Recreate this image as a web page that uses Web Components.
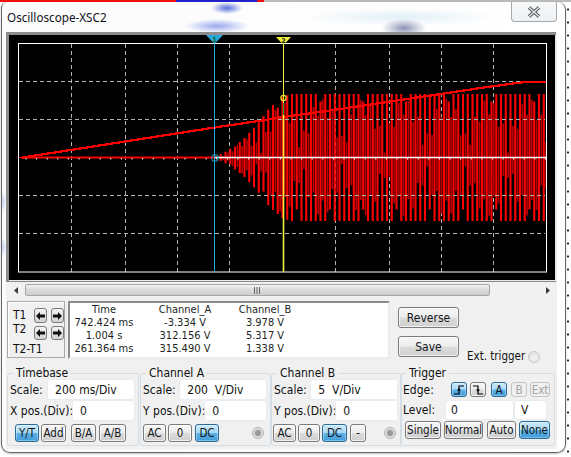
<!DOCTYPE html>
<html><head><meta charset="utf-8"><title>Oscilloscope-XSC2</title>
<style>
html,body{margin:0;padding:0;height:457px;overflow:hidden}
body{font:11px "DejaVu Sans Condensed","DejaVu Sans",sans-serif;color:#111;
background:
 linear-gradient(90deg,#e11 0,#e11 176px,#22c 176px,#22c 257px,#e11 257px,#e11 264px,#bbb 264px) 0 0/100% 2px no-repeat,
 radial-gradient(circle,#222 1px,transparent 1.2px) 565px 3px/6px 13px repeat-y,
 #fff;}
</style></head><body>
<scope-window>
  <scope-screen></scope-screen>
  <scope-scrollbar></scope-scrollbar>
  <scope-readouts></scope-readouts>
  <scope-controls></scope-controls>
</scope-window>
<script>
function def(name,css,html,init){
  customElements.define(name,class extends HTMLElement{
    constructor(){super();const r=this.attachShadow({mode:'open'});r.innerHTML='<style>'+css+'</style>'+html;}
    connectedCallback(){if(init)init.call(this,this.shadowRoot);}
  });
}
def('scope-window',`
:host{display:block;box-sizing:border-box;width:565px;height:451px;margin:2px 0 0 1px;padding:0 8px 0 4px;
border:1px solid #666;border-top:0;border-radius:6px 8px 9px 9px;
background:
 radial-gradient(ellipse 32px 7px at 215px 24px,#98aaec,rgba(152,170,236,0) 100%),
 radial-gradient(ellipse 16px 6px at 225px 6px,#5a70de,rgba(90,112,222,0) 100%),
 radial-gradient(ellipse 22px 9px at 402px 26px,#8d92b6,rgba(141,146,182,0) 100%),
 radial-gradient(ellipse 100px 9px at 400px 15px,#e3f0f7,rgba(227,240,247,0) 100%),
 radial-gradient(ellipse 3px 10px at 1px 200px,#c9d3f4,rgba(201,211,244,0) 100%),
 radial-gradient(ellipse 3px 10px at 1px 245px,#c9d3f4,rgba(201,211,244,0) 100%),
 linear-gradient(90deg,#fbfbfc,#fff);box-shadow:0 1px 2px rgba(0,0,0,.25)}
.bar{display:flex;justify-content:space-between;height:30px;align-items:flex-start}
.t{font:11.7px "Noto Sans","Open Sans",sans-serif;color:#10131a;margin:7px 0 0 1px}
.x{box-sizing:border-box;width:46px;height:20px;border:1px solid #a5a9ad;border-top:0;border-radius:0 0 4px 4px;display:flex;align-items:center;justify-content:center;background:linear-gradient(#f6f8f9,#eef2f4)}
.p{background:#f0f0f0;height:417px}
`,`<div class="bar"><div class="t">Oscilloscope-XSC2</div><div class="x"><svg width="14" height="12" viewBox="0 0 14 12"><path d="M2 1.500L12 10.500M12 1.500L2 10.500" stroke="#4b5157" stroke-width="3.400" fill="none"/><path d="M2 1.500L12 10.500M12 1.500L2 10.500" stroke="#e4e8ea" stroke-width="1.400" fill="none"/></svg></div></div><div class="p"><slot></slot></div>`);

def('scope-screen',`:host{display:block;height:251px}svg{display:block}`,
`<svg id="s" width="551" height="251" viewBox="6 32 551 251" xmlns="http://www.w3.org/2000/svg"></svg>`,
function(r){
  const interp=(t,x)=>{if(x<=t[0][0])return t[0][1];for(let i=1;i<t.length;i++){if(x<=t[i][0]){const a=t[i-1],b=t[i];return a[1]+(b[1]-a[1])*(x-a[0])/(b[0]-a[0]);}}return t[t.length-1][1];};
  let h='';
  h+='<rect x="6" y="32" width="551" height="251" fill="#f0f0f0"/>';
  h+='<rect x="6" y="32" width="550" height="250" fill="#8c8c8c"/>';
  h+='<rect x="9" y="35" width="546" height="245" fill="#000"/>';
  h+='<rect x="9" y="280" width="547" height="1" fill="#e8e8e8"/>';
  h+='<rect x="555" y="35" width="1" height="246" fill="#e8e8e8"/>';
  const vs=[71,125,177,229,283,335,389,441,493], hs=[81,119,157,195,233];
  for(const x of vs)h+=`<line x1="${x+.5}" y1="44" x2="${x+.5}" y2="272" stroke="#b4b4b4" stroke-dasharray="4 3"/>`;
  // Channel A: flat trace, then a comb of bright full-height bars with dim beat bars between them
  const env=[[214,0],[228,7],[243,18],[257,33],[270,50],[283,61],[292,63.5],[546,63.5]];
  const period=4.75;
  let bright='M22 157.5H214', dim='';
  for(let k=0,x=216;x<545;k++,x+=period){
    const a=interp(env,x);
    const lo=(k%7===3)?0.82:1, up=(k%9===4)?0.88:1;
    bright+=`M${x.toFixed(2)} ${(157.5-a*up).toFixed(1)}V${(157.5+a*lo).toFixed(1)}`;
    const xd=x+period/2, ad=interp(env,xd);
    const m=0.18+0.62*Math.abs(Math.sin(k*0.36));
    const off=(k%2?1:-1)*ad*0.12;
    dim+=`M${xd.toFixed(2)} ${(157.5-ad*m+off).toFixed(1)}V${(157.5+ad*m+off).toFixed(1)}`;
  }
  h+=`<path d="${dim}" fill="none" stroke="#b80000" stroke-width="1.700"/>`;
  h+=`<path d="${bright}" fill="none" stroke="#f00" stroke-width="2.100"/>`;
  for(const y of hs){ if(y===157)continue; h+=`<line x1="19" y1="${y+.5}" x2="545" y2="${y+.5}" stroke="#b4b4b4" stroke-dasharray="4 3"/>`;}
  let t='';for(let tx=26;tx<546;tx+=10.6)t+=`M${tx.toFixed(1)} 158V159.500`;
  h+=`<path d="${t}" stroke="#fff" fill="none"/>`;
  h+=`<line x1="214" y1="157.500" x2="546" y2="157.500" stroke="#fff" stroke-width="1.300"/>`;
  h+=`<line x1="19" y1="157.500" x2="214" y2="157.500" stroke="#f00"/>`;
  // Channel B stepped ramp
  const rp=[[22,157.5],[214,127.5],[258,121],[283,117],[333,110],[387,102],[440,94],[480,88],[520,82.5],[546,81.5]];
  let q='';let pv=null;
  for(let px=22;px<=546;px+=1){const yy=Math.round(interp(rp,px));q+=(q?'L':'M')+px+' '+(pv===null?yy:pv)+(pv!==null&&pv!==yy?'L'+px+' '+yy:'');pv=yy;}
  h+=`<path d="${q}" fill="none" stroke="#f00" stroke-width="2" shape-rendering="crispEdges"/>`;
  h+='<rect x="18.500" y="43.500" width="528" height="228.500" fill="none" stroke="#fff"/>';
  h+='<line x1="214.500" y1="40" x2="214.500" y2="272" stroke="#29a9dc"/>';
  h+='<path d="M206 35H223L214.500 44Z" fill="#29a9dc"/>';
  h+='<text x="214.500" y="41.500" font-size="7" font-weight="bold" text-anchor="middle" fill="#063" font-family="DejaVu Sans">1</text>';
  h+='<rect x="212" y="155" width="6" height="6" rx="1" fill="none" stroke="#29a9dc"/>';
  h+='<line x1="283.500" y1="40" x2="283.500" y2="103" stroke="#f2f23c"/>';
  h+='<line x1="283.500" y1="103" x2="283.500" y2="115" stroke="#1e9a3c"/>';
  h+='<line x1="283.500" y1="115" x2="283.500" y2="272" stroke="#f2f23c" stroke-width="1.600"/>';
  h+='<path d="M276 37H291L283.500 45Z" fill="#f2f23c"/>';
  h+='<text x="283.500" y="42.500" font-size="6.500" font-weight="bold" text-anchor="middle" fill="#222" font-family="DejaVu Sans">2</text>';
  h+='<circle cx="283.500" cy="98" r="2.600" fill="none" stroke="#e6e62c" stroke-width="1.200"/>';
  r.getElementById('s').innerHTML=h;
});

def('scope-scrollbar',`
:host{display:flex;height:13px;box-sizing:border-box;background:#f1f1f1;padding:1px 1px 0 1px;align-items:stretch}
.a{width:18px;display:flex;align-items:center;justify-content:center}
.th{width:465px;box-sizing:border-box;border:1px solid #a6a6a6;border-radius:2px;background:linear-gradient(#f3f3f3,#dadada 50%,#cfcfcf);display:flex;align-items:center;justify-content:center}
.tr{flex:1}
`,`<div class="a"><svg width="5" height="7"><path d="M4 0V7L0 3.500Z" fill="#3c3c3c"/></svg></div>
<div class="th"><svg width="8" height="7"><path d="M.5 0V7M3 0V7M5.500 0V7" stroke="#666"/></svg></div>
<div class="tr"></div>
<div class="a"><svg width="5" height="7"><path d="M1 0V7L5 3.500Z" fill="#3c3c3c"/></svg></div>`);

def('x-btn',`
:host{display:inline-flex;box-sizing:border-box;height:18px;align-items:center;justify-content:center;border:1px solid #7b7b7b;border-radius:3px;color:#14181c;white-space:nowrap;font-size:11.500px;
background:linear-gradient(#f6f6f6,#ededed 48%,#dcdcdc 52%,#cfcfcf);box-shadow:inset 0 0 0 1px rgba(255,255,255,.7)}
:host([on]){border-color:#2b6a96;background:linear-gradient(#cde9f9,#a9d8f4 48%,#5fb2e6 52%,#3f9bd8);box-shadow:inset 0 0 0 1px rgba(255,255,255,.35)}
:host([off]){border-color:#c4c4c4;color:#a3a3a3;background:#f0f0f0;box-shadow:none}
`,`<slot></slot>`);

def('x-field',`:host{display:flex;box-sizing:border-box;height:19px;align-items:center;background:#fff;border-radius:2px;padding-left:7px;white-space:pre;box-shadow:0 0 0 .5px #e2e8ec}`,`<slot></slot>`);

def('x-led',`:host{display:block;width:12px;height:12px;border-radius:50%;border:1px solid #b0b0b0;box-sizing:border-box;background:radial-gradient(circle,#8e8e8e 0,#a5a5a5 40%,#e8e8e8 60%,#d0d0d0 100%)}
:host([pale]){border-color:#c9c9c9;background:radial-gradient(circle at 50% 60%,#f3f3f3,#dcdcdc)}`,``);

def('x-group',`
:host{display:block;box-sizing:border-box;height:79px}
fieldset{margin:0;height:100%;box-sizing:border-box;border:1px solid #d3dde4;border-radius:3px;padding:0 4px 0 2px}
legend{margin-left:3px;padding:0 3px;font-size:12px;line-height:13px}
`,`<fieldset><legend><slot name="l"></slot></legend><slot></slot></fieldset>`);

def('x-row',`:host{display:flex;align-items:center;justify-content:space-between;height:19px;margin-bottom:2px;white-space:nowrap;font-size:12px}`,`<slot></slot>`);

def('scope-readouts',`
:host{display:flex;margin-top:5px;padding-left:1px;height:58px;box-sizing:border-box}
.t{box-sizing:border-box;width:58px;height:57px;border:1px solid #a8a8a8;box-shadow:inset 1px 1px 0 #fff;display:flex;padding:6px 0 0 5px;font-size:12px;line-height:14px}
.l{width:21px;display:flex;flex-direction:column}
.l span:last-child{margin-top:6px;white-space:nowrap}
.c{display:grid;grid-template-columns:13px 13px;grid-template-rows:15px 14px;gap:3px 4px}
.ar{box-sizing:border-box;border:1px solid #7b7b7b;border-radius:3px;background:linear-gradient(#f4f4f4,#d2d2d2);display:flex;align-items:center;justify-content:center}
.r{box-sizing:border-box;width:322px;height:58px;margin-left:3px;background:#fff;border:2px solid;border-color:#8a8a8a #ececec #ececec #8a8a8a;display:grid;grid-template-columns:68px 94px 66px;grid-auto-rows:13px;padding-top:0;justify-items:center;align-items:center;font-size:11px;line-height:13px;color:#1a1f24}
.b{display:flex;flex-direction:column;gap:8px;margin-left:8px;padding-top:6px}
.b x-btn{width:61px;height:21px;font-size:12px}
.e{display:flex;align-items:flex-end;gap:3px;margin-left:8px;font-size:11.500px;white-space:nowrap}
.e x-led{margin-bottom:-4px}
.e span{margin-bottom:-4px}
`,`
<div class="t"><div class="l"><span>T1</span><span>T2</span><span>T2-T1</span></div>
<div class="c">
<div class="ar"><svg width="9" height="8"><path d="M0 4L4 0V2.500H9V5.500H4V8Z" fill="#111"/></svg></div>
<div class="ar"><svg width="9" height="8"><path d="M9 4L5 0V2.500H0V5.500H5V8Z" fill="#111"/></svg></div>
<div class="ar"><svg width="9" height="8"><path d="M0 4L4 0V2.500H9V5.500H4V8Z" fill="#111"/></svg></div>
<div class="ar"><svg width="9" height="8"><path d="M9 4L5 0V2.500H0V5.500H5V8Z" fill="#111"/></svg></div>
</div></div>
<div class="r">
<span>Time</span><span>Channel_A</span><span>Channel_B</span>
<span>742.424 ms</span><span>-3.334 V</span><span>3.978 V</span>
<span>1.004 s</span><span>312.156 V</span><span>5.317 V</span>
<span>261.364 ms</span><span>315.490 V</span><span>1.338 V</span>
</div>
<div class="b"><x-btn>Reverse</x-btn><x-btn>Save</x-btn></div>
<div class="e"><span>Ext. trigger</span><x-led pale></x-led></div>`);

def('scope-controls',`
:host{display:grid;grid-template-columns:130px 128px 126px 155px;column-gap:3px;margin-top:8px;padding-left:1px;font-size:12px}
.bt{display:flex;align-items:center;height:18px;margin-top:4px;gap:2px}
.bt x-led{margin-left:auto;margin-right:1px}
.edge{display:flex;align-items:center;justify-content:space-between;height:19px;margin-bottom:2px}
.edge div{display:flex;align-items:center}
.edge x-btn{height:15px}
.lv{display:flex;gap:2px;margin-right:3px}
`,`
<x-group><span slot="l">Timebase</span>
 <x-row><span>Scale:</span><x-field style="width:86px">200 ms/Div</x-field></x-row>
 <x-row><span>X pos.(Div):</span><x-field style="width:61px">0</x-field></x-row>
 <div class="bt" style="padding-left:5px"><x-btn on style="width:24px">Y/T</x-btn><x-btn style="width:25px">Add</x-btn><x-btn style="width:25px;margin-left:3px">B/A</x-btn><x-btn style="width:27px;margin-left:1px">A/B</x-btn></div>
</x-group>
<x-group><span slot="l">Channel A</span>
 <x-row><span>Scale:</span><x-field style="width:86px">200  V/Div</x-field></x-row>
 <x-row><span>Y pos.(Div):</span><x-field style="width:61px">0</x-field></x-row>
 <div class="bt"><x-btn style="width:23px">AC</x-btn><x-btn style="width:24px">0</x-btn><x-btn on style="width:24px;margin-left:1px">DC</x-btn><x-led style="margin-right:2px"></x-led></div>
</x-group>
<x-group><span slot="l">Channel B</span>
 <x-row><span>Scale:</span><x-field style="width:86px">5  V/Div</x-field></x-row>
 <x-row><span>Y pos.(Div):</span><x-field style="width:61px">0</x-field></x-row>
 <div class="bt" style="margin-left:-1px"><x-btn style="width:23px">AC</x-btn><x-btn style="width:22px">0</x-btn><x-btn on style="width:25px">DC</x-btn><x-btn style="width:16px;margin-left:1px">-</x-btn><x-led></x-led></div>
</x-group>
<x-group><span slot="l">Trigger</span>
 <div class="edge"><span>Edge:</span><div>
  <x-btn on style="width:16px"><svg width="12" height="10"><path d="M1 9H6V1H11" fill="none" stroke="#000" stroke-width="1.200"/><path d="M4 5.500H8L6 3Z" fill="#000"/></svg></x-btn>
  <x-btn style="width:16px;margin-left:3px"><svg width="12" height="10"><path d="M1 1H6V9H11" fill="none" stroke="#000" stroke-width="1.200"/><path d="M4 4.500H8L6 7Z" fill="#000"/></svg></x-btn>
  <x-btn on style="width:16px;margin-left:5px">A</x-btn><x-btn off style="width:16px;margin-left:4px">B</x-btn><x-btn off style="width:20px;margin-left:3px;margin-right:0">Ext</x-btn></div></div>
 <x-row style="margin:0 4px 0 0;height:18px"><span>Level:</span><div class="lv" style="margin:0"><x-field style="width:67px;height:18px;padding-left:5px">0</x-field><x-field style="width:31px;height:18px;padding-left:6px">V</x-field></div></x-row>
 <div class="bt" style="padding-left:2px;margin-top:2px"><x-btn style="width:36px">Single</x-btn><x-btn style="width:39px;margin-left:1px">Normal</x-btn><x-btn style="width:29px;margin-left:2px">Auto</x-btn><x-btn on style="width:31px;margin-left:1px">None</x-btn></div>
</x-group>`);
</script>
</body></html>
